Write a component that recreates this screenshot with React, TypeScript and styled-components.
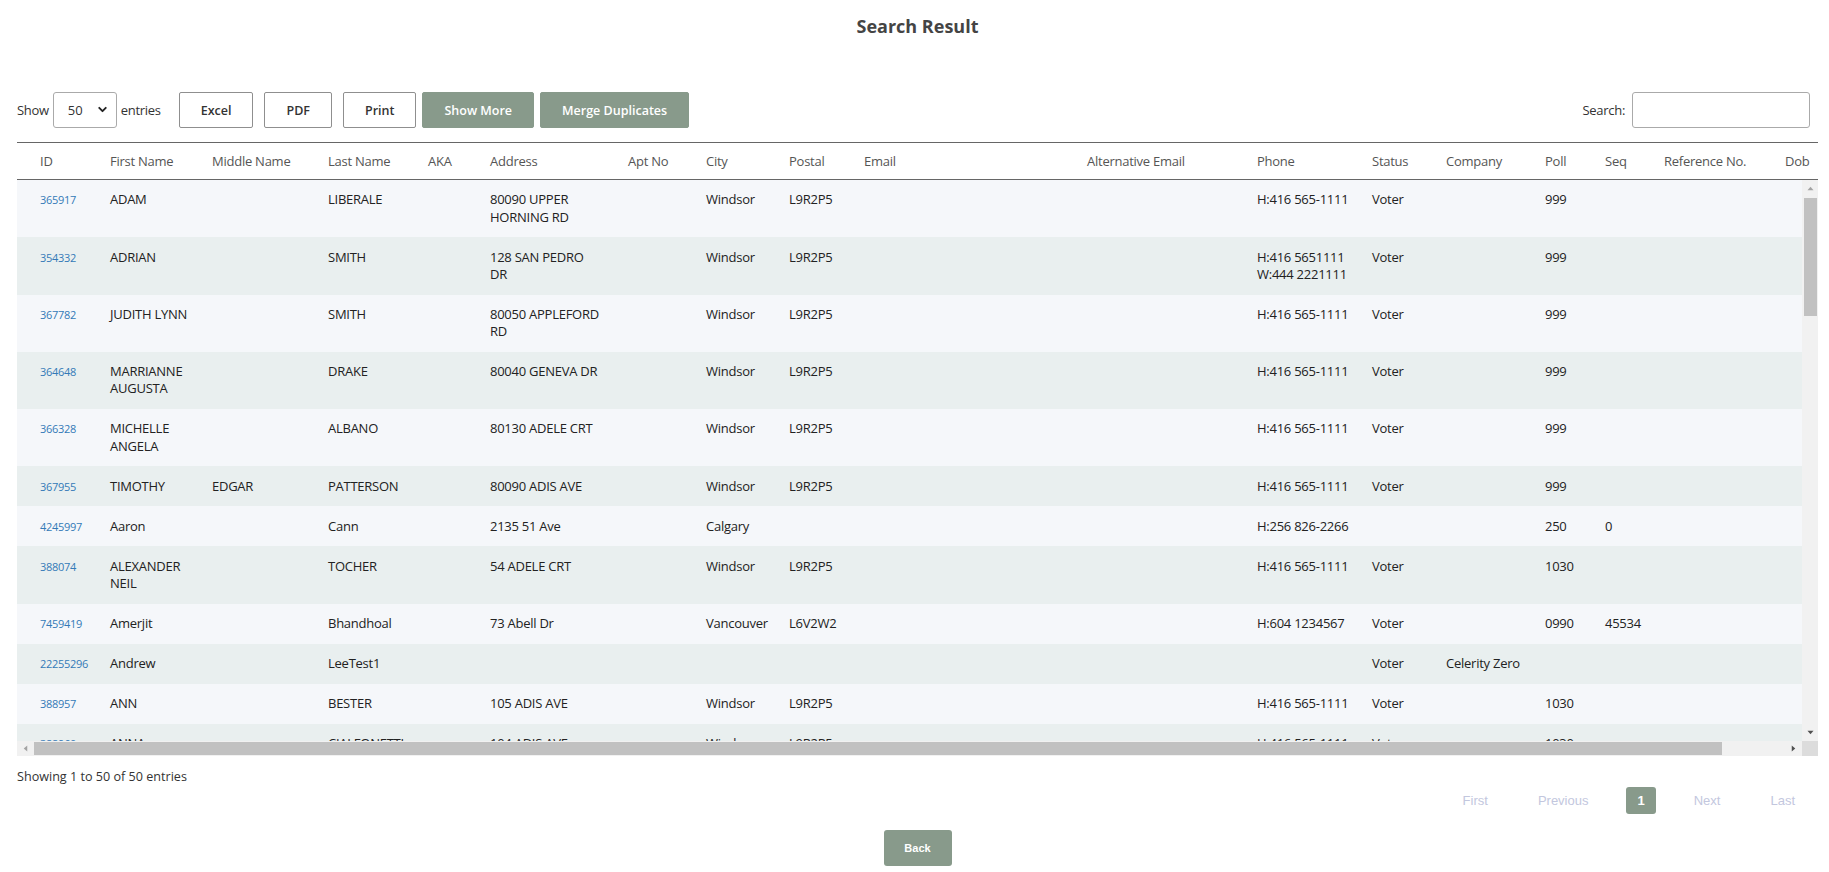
import React from 'react';
import styled, { createGlobalStyle } from 'styled-components';
import { ChevronDown } from 'lucide-react';

const GlobalStyle = createGlobalStyle`
  html, body { margin: 0; padding: 0; background: #fff; }
  body { font-family: "Open Sans", "Liberation Sans", sans-serif; color: #333; }
  * { box-sizing: border-box; }
`;

const GREEN = '#889a8b';

const Page = styled.div`
  width: 1829px;
  height: 872px;
  overflow: hidden;
  padding: 0 11px 0 17px;
  display: flex;
  flex-direction: column;
`;

const Title = styled.h2`
  margin: 14px 0 0;
  text-align: center;
  font-size: 18px;
  font-weight: 700;
  line-height: 24px;
  color: #444;
`;

const Toolbar = styled.div`
  margin-top: 54px;
  height: 36px;
  display: flex;
  align-items: center;
  font-size: 13px;
  letter-spacing: -0.3px;
  color: #333;
`;

const LengthLabel = styled.label`
  display: flex;
  align-items: center;
  gap: 4px;
`;

const SelectWrap = styled.div`
  position: relative;
  width: 64px;
  height: 36px;
`;

const Select = styled.select`
  appearance: none;
  width: 100%;
  height: 100%;
  border: 1px solid #aaa;
  border-radius: 3px;
  background: #fff;
  padding: 0 0 0 14px;
  font-family: "Open Sans", sans-serif;
  font-size: 13px;
  color: #333;
`;

const SelectIcon = styled.span`
  position: absolute;
  right: 8px;
  top: 11px;
  display: flex;
  pointer-events: none;
  color: #222;
`;

const Button = styled.button<{ $solid?: boolean; $ml: number }>`
  margin-left: ${(p) => p.$ml}px;
  height: 36px;
  padding: 0 21px;
  border-radius: 2px;
  font-family: "Open Sans", sans-serif;
  font-size: 12.5px;
  font-weight: 600;
  cursor: pointer;
  border: 1px solid ${(p) => (p.$solid ? GREEN : '#8f8f8f')};
  background: ${(p) => (p.$solid ? GREEN : '#fff')};
  color: ${(p) => (p.$solid ? '#fff' : '#333')};
`;

const SearchBox = styled.label`
  margin-left: auto;
  margin-right: 8px;
  display: flex;
  align-items: center;
  gap: 7px;
`;

const SearchInput = styled.input`
  width: 178px;
  height: 36px;
  border: 1px solid #aaa;
  border-radius: 3px;
  padding: 0 8px;
  font-family: "Open Sans", sans-serif;
  font-size: 13px;
`;

const HeadWrap = styled.div`
  margin-top: 14px;
  overflow: hidden;
`;

const Table = styled.table`
  width: 1851px;
  table-layout: fixed;
  border-collapse: collapse;
  border-spacing: 0;
`;

const Th = styled.th<{ $first?: boolean }>`
  padding: 9px 10px 9px ${(p) => (p.$first ? 23 : 10)}px;
  text-align: left;
  font-size: 13px;
  letter-spacing: -0.25px;
  font-weight: 400;
  line-height: 18px;
  color: #555;
  white-space: nowrap;
  border-top: 1px solid #666;
  border-bottom: 1px solid #666;
`;

/* scroll frame: viewport + custom scrollbars */
const ScrollFrame = styled.div`
  display: grid;
  grid-template-columns: 1fr 16px;
  grid-template-rows: 561px 15px;
`;

const Viewport = styled.div`
  overflow: hidden;
`;

const VBar = styled.div`
  background: #f1f1f1;
  display: flex;
  flex-direction: column;
`;

const HBar = styled.div`
  background: #f1f1f1;
  display: flex;
`;

const Corner = styled.div`
  background: #dcdcdc;
`;

const ArrowBtn = styled.div`
  flex: 0 0 17px;
  display: flex;
  align-items: center;
  justify-content: center;
`;

const Track = styled.div<{ $vertical?: boolean }>`
  flex: 1;
  display: flex;
  flex-direction: ${(p) => (p.$vertical ? 'column' : 'row')};
  padding: ${(p) => (p.$vertical ? '1px 1px 0 2px' : '1px 0 1px 0')};
`;

const Thumb = styled.div<{ $vertical?: boolean; $size: string }>`
  background: #c1c1c1;
  ${(p) => (p.$vertical ? `height: ${p.$size}; width: 100%;` : `width: ${p.$size}; height: 100%;`)}
`;

const Arrow = ({ dir, active }: { dir: 'up' | 'down' | 'left' | 'right'; active: boolean }) => {
  const pts = {
    up: '0.5,4 3.5,0.5 6.5,4',
    down: '0.5,0.5 3.5,4 6.5,0.5',
    left: '4,0.5 0.5,3.5 4,6.5',
    right: '0.5,0.5 4,3.5 0.5,6.5',
  }[dir];
  const vertical = dir === 'up' || dir === 'down';
  return (
    <svg width={vertical ? 7 : 5} height={vertical ? 5 : 7} viewBox={vertical ? '0 0 7 4.5' : '0 0 4.5 7'}>
      <polygon points={pts} fill={active ? '#505050' : '#a3a3a3'} />
    </svg>
  );
};

const Tr = styled.tr<{ $odd: boolean }>`
  background: ${(p) => (p.$odd ? '#f5f7fa' : '#e9efef')};
`;

const Td = styled.td<{ $first?: boolean; $wideRight?: boolean }>`
  padding: 11.35px ${(p) => (p.$wideRight ? 15 : 10)}px 11.35px ${(p) => (p.$first ? 23 : 10)}px;
  vertical-align: top;
  font-size: 13px;
  letter-spacing: -0.25px;
  line-height: 17.3px;
  color: #222;
`;

const IdLink = styled.a`
  font-size: 11px;
  letter-spacing: -0.3px;
  color: #337ab7;
  text-decoration: none;
`;

const Info = styled.div`
  margin-top: 12px;
  font-size: 12.6px;
  line-height: 18px;
  color: #333;
`;

const Paginate = styled.div`
  margin-top: 1px;
  padding-right: 11px;
  display: flex;
  justify-content: flex-end;
  align-items: center;
  gap: 26px;
`;

const PageLink = styled.span<{ $current?: boolean }>`
  padding: 5px ${(p) => (p.$current ? 11 : 12)}px;
  font-family: "Liberation Sans", Arial, sans-serif;
  font-size: 13px;
  line-height: 17px;
  border-radius: 3px;
  font-weight: ${(p) => (p.$current ? 700 : 400)};
  color: ${(p) => (p.$current ? '#fff' : '#c3c7de')};
  background: ${(p) => (p.$current ? GREEN : 'transparent')};
`;

const BackButton = styled.button`
  margin: 16px auto 0;
  width: 68px;
  height: 36px;
  border: none;
  border-radius: 3px;
  background: ${GREEN};
  color: #fff;
  font-family: "Liberation Sans", Arial, sans-serif;
  font-size: 11px;
  font-weight: 700;
  cursor: pointer;
`;

const COLS: [string, number][] = [
  ['ID', 83],
  ['First Name', 102],
  ['Middle Name', 116],
  ['Last Name', 100],
  ['AKA', 62],
  ['Address', 138],
  ['Apt No', 78],
  ['City', 83],
  ['Postal', 75],
  ['Email', 223],
  ['Alternative Email', 170],
  ['Phone', 115],
  ['Status', 74],
  ['Company', 99],
  ['Poll', 60],
  ['Seq', 59],
  ['Reference No.', 121],
  ['Dob', 93],
];

type Row = {
  id: string;
  first: string;
  middle?: string;
  last: string;
  address?: string;
  city?: string;
  postal?: string;
  phone?: string[];
  status?: string;
  company?: string;
  poll?: string;
  seq?: string;
};

const W = 'Windsor';
const P = 'L9R2P5';
const PH = ['H:416 565-1111'];

const ROWS: Row[] = [
  { id: '365917', first: 'ADAM', last: 'LIBERALE', address: '80090 UPPER HORNING RD', city: W, postal: P, phone: PH, status: 'Voter', poll: '999' },
  { id: '354332', first: 'ADRIAN', last: 'SMITH', address: '128 SAN PEDRO DR', city: W, postal: P, phone: ['H:416 5651111', 'W:444 2221111'], status: 'Voter', poll: '999' },
  { id: '367782', first: 'JUDITH LYNN', last: 'SMITH', address: '80050 APPLEFORD RD', city: W, postal: P, phone: PH, status: 'Voter', poll: '999' },
  { id: '364648', first: 'MARRIANNE AUGUSTA', last: 'DRAKE', address: '80040 GENEVA DR', city: W, postal: P, phone: PH, status: 'Voter', poll: '999' },
  { id: '366328', first: 'MICHELLE ANGELA', last: 'ALBANO', address: '80130 ADELE CRT', city: W, postal: P, phone: PH, status: 'Voter', poll: '999' },
  { id: '367955', first: 'TIMOTHY', middle: 'EDGAR', last: 'PATTERSON', address: '80090 ADIS AVE', city: W, postal: P, phone: PH, status: 'Voter', poll: '999' },
  { id: '4245997', first: 'Aaron', last: 'Cann', address: '2135 51 Ave', city: 'Calgary', phone: ['H:256 826-2266'], poll: '250', seq: '0' },
  { id: '388074', first: 'ALEXANDER NEIL', last: 'TOCHER', address: '54 ADELE CRT', city: W, postal: P, phone: PH, status: 'Voter', poll: '1030' },
  { id: '7459419', first: 'Amerjit', last: 'Bhandhoal', address: '73 Abell Dr', city: 'Vancouver', postal: 'L6V2W2', phone: ['H:604 1234567'], status: 'Voter', poll: '0990', seq: '45534' },
  { id: '22255296', first: 'Andrew', last: 'LeeTest1', status: 'Voter', company: 'Celerity Zero' },
  { id: '388957', first: 'ANN', last: 'BESTER', address: '105 ADIS AVE', city: W, postal: P, phone: PH, status: 'Voter', poll: '1030' },
  { id: '388960', first: 'ANNA', last: 'CIALFONETTI', address: '104 ADIS AVE', city: W, postal: P, phone: PH, status: 'Voter', poll: '1030' },
];

const EXTRA_FIRST = ['ANTHONY', 'BARBARA', 'BRIAN', 'CAROL', 'CHARLES', 'DANIEL', 'DAVID', 'DEBORAH', 'DONALD', 'DOROTHY', 'EDWARD', 'ELIZABETH', 'FRANK', 'GARY', 'GEORGE', 'HELEN', 'JAMES', 'JASON', 'JENNIFER', 'JOHN', 'JOSEPH', 'KAREN', 'KENNETH', 'KEVIN', 'LINDA', 'LISA', 'MARGARET', 'MARK', 'MARY', 'MICHAEL', 'NANCY', 'PATRICIA', 'PAUL', 'RICHARD', 'ROBERT', 'RONALD', 'SANDRA', 'SUSAN'];
const EXTRA_LAST = ['ABBOTT', 'BAKER', 'CAMPBELL', 'DAWSON', 'ELLIOTT', 'FRASER', 'GRANT', 'HUGHES'];
const EXTRA_STREET = ['ADIS AVE', 'ADELE CRT', 'GENEVA DR', 'APPLEFORD RD', 'UPPER HORNING RD'];

EXTRA_FIRST.forEach((f, i) => {
  ROWS.push({
    id: String(389000 + i * 37),
    first: f,
    last: EXTRA_LAST[i % EXTRA_LAST.length],
    address: `${110 + i * 2} ${EXTRA_STREET[i % EXTRA_STREET.length]}`,
    city: W,
    postal: P,
    phone: PH,
    status: 'Voter',
    poll: '1030',
  });
});

const ColGroup = () => (
  <colgroup>
    {COLS.map(([name, w]) => (
      <col key={name} style={{ width: w }} />
    ))}
  </colgroup>
);

export default function App() {
  return (
    <>
      <GlobalStyle />
      <Page>
        <Title>Search Result</Title>
        <Toolbar>
          <LengthLabel>
            Show
            <SelectWrap>
              <Select defaultValue="50">
                <option value="10">10</option>
                <option value="25">25</option>
                <option value="50">50</option>
                <option value="100">100</option>
              </Select>
              <SelectIcon>
                <ChevronDown size={13} strokeWidth={3.5} />
              </SelectIcon>
            </SelectWrap>
            entries
          </LengthLabel>
          <Button $ml={18}>Excel</Button>
          <Button $ml={11}>PDF</Button>
          <Button $ml={11}>Print</Button>
          <Button $ml={6} $solid>
            Show More
          </Button>
          <Button $ml={6} $solid>
            Merge Duplicates
          </Button>
          <SearchBox>
            Search:
            <SearchInput type="search" />
          </SearchBox>
        </Toolbar>

        <HeadWrap>
          <Table>
            <ColGroup />
            <thead>
              <tr>
                {COLS.map(([name], i) => (
                  <Th key={name} $first={i === 0}>
                    {name}
                  </Th>
                ))}
              </tr>
            </thead>
          </Table>
        </HeadWrap>
        <ScrollFrame>
          <Viewport>
            <Table>
              <ColGroup />
              <tbody>
                {ROWS.map((r, i) => (
                  <Tr key={r.id} $odd={i % 2 === 0}>
                    <Td $first>
                      <IdLink href="#">{r.id}</IdLink>
                    </Td>
                    <Td>{r.first}</Td>
                    <Td>{r.middle}</Td>
                    <Td>{r.last}</Td>
                    <Td />
                    <Td $wideRight>{r.address}</Td>
                    <Td />
                    <Td>{r.city}</Td>
                    <Td>{r.postal}</Td>
                    <Td />
                    <Td />
                    <Td>
                      {r.phone?.map((p, k) => (
                        <React.Fragment key={p}>
                          {k > 0 && <br />}
                          {p}
                        </React.Fragment>
                      ))}
                    </Td>
                    <Td>{r.status}</Td>
                    <Td>{r.company}</Td>
                    <Td>{r.poll}</Td>
                    <Td>{r.seq}</Td>
                    <Td />
                    <Td />
                  </Tr>
                ))}
              </tbody>
            </Table>
          </Viewport>
          <VBar>
            <ArrowBtn>
              <Arrow dir="up" active={false} />
            </ArrowBtn>
            <Track $vertical>
              <Thumb $vertical $size="118px" />
            </Track>
            <ArrowBtn>
              <Arrow dir="down" active />
            </ArrowBtn>
          </VBar>
          <HBar>
            <ArrowBtn>
              <Arrow dir="left" active={false} />
            </ArrowBtn>
            <Track>
              <Thumb $size="96.4%" />
            </Track>
            <ArrowBtn>
              <Arrow dir="right" active />
            </ArrowBtn>
          </HBar>
          <Corner />
        </ScrollFrame>

        <Info>Showing 1 to 50 of 50 entries</Info>
        <Paginate>
          <PageLink>First</PageLink>
          <PageLink>Previous</PageLink>
          <PageLink $current>1</PageLink>
          <PageLink>Next</PageLink>
          <PageLink>Last</PageLink>
        </Paginate>
        <BackButton>Back</BackButton>
      </Page>
    </>
  );
}
